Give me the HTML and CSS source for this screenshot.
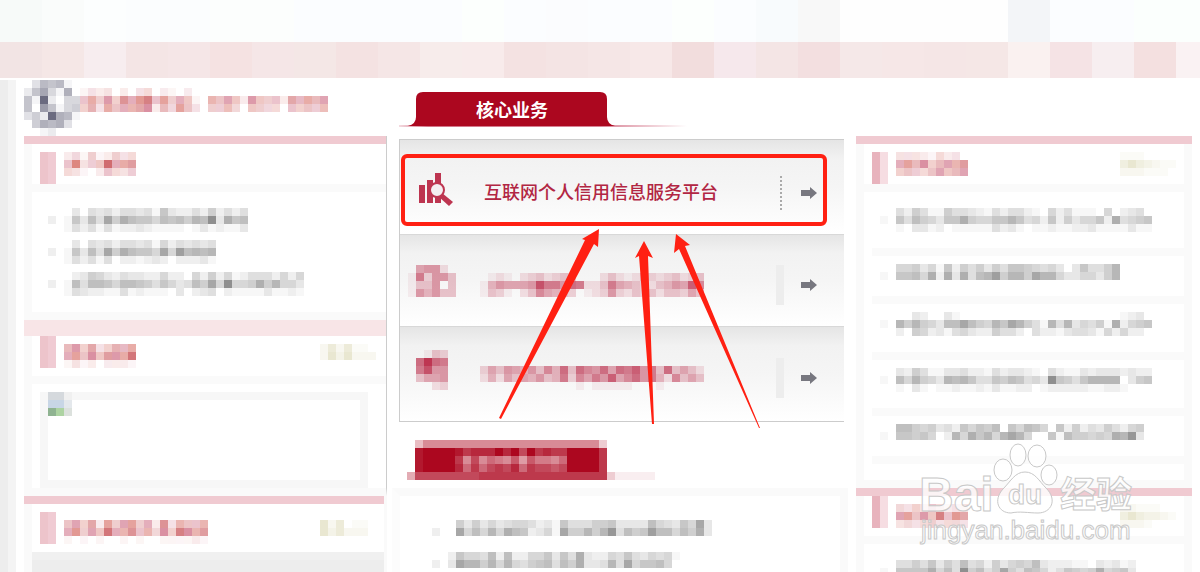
FILE: index.html
```
<!DOCTYPE html>
<html lang="zh-CN">
<head>
<meta charset="utf-8">
<title>核心业务</title>
<link rel="stylesheet" href="styles.css">
</head>
<body>
<div class="page">
  <header class="strip strip-top" data-strip="f7faf9 fafcfb fcfefe fbfdfe fbfdfe fcfefd fcfefd fbfdff fbfdff fbfdff fbfdff fcfffd fbfdff fbfcfe fbfdff fbfdff fcfffd fbfdff f8fbfd f8f8f8 fefefe fefefe fefefe fefefe f3f5f8 fbfdff fbfdff fbfffd fbfffd"></header>
  <nav class="strip strip-nav" data-strip="f2e4e4 f5e7e6 f7edef f4e5e5 f5e6e7 f5e2e2 f5e6e7 f4e7e6 f4e2e2 f5e6e6 f7eceb f8ebeb f4e2e2 f4e4e4 f5e6e6 f7e8e8 f2dddd f6e8ec f4e5e5 f3dfe0 f5e8e8 f6e7e7 f5e6e6 f5e7e6 faf1f0 f5e3e5 f7eef0 f4e0e0 faf2f3"></nav>

  <main class="columns">
    <section class="side">
      <div class="brand">
        <svg data-tint="slate" data-rows="0376710 2694180 61f2044 60a6145 352f871 0587830 0012000"></svg>
        <svg class="brand-name" data-tint="rose" data-rows="1323020340210200000000000000000 695a5b8bd6a5861086962a656297979 58396889b274a630557406544065657"></svg>
      </div>
      <section class="panel ruled">
        <div class="panel-head">
          <span class="marker"></span>
          <svg data-tint="rose" data-rows="241512534 6d356f89a 431026435"></svg>
        </div>
        <ul class="side-list">
          <li><svg data-tint="gray" data-rows="0003043424434173224262424 2017384b6a8775878698e3a78 0014241412232111101312113"></svg></li>
          <li><svg data-tint="gray" data-rows="000304342443415243434 2017384b6a8775b5c8989 001424140221232022231"></svg></li>
          <li><svg data-tint="gray" data-rows="00023653243322522052625124442525 20184887588764753486b5e556a69553 00143221141211103023402111131121"></svg></li>
        </ul>
      </section>
      <section class="panel ruled panel-soft">
        <div class="panel-head">
          <span class="marker"></span>
          <svg data-tint="rose" data-rows="7a5935879 8a6b6aa9e 131202221"></svg>
          <svg class="more" data-tint="olive" data-rows="2525110 2636222"></svg>
        </div>
        <div class="picture"><svg width="24" height="24" viewBox="0 0 24 24" shape-rendering="crispEdges"><path fill="#d5d9dd" d="M0 0h16v8H0z"/><path fill="#c8d6e6" d="M0 8h16v8H0z"/><path fill="#f0f0f0" d="M16 0h8v8h-8z"/><path fill="#e4e8ec" d="M16 8h8v8h-8z"/><path fill="#8fb391" d="M0 16h8v8H0z"/><path fill="#add3a2" d="M8 16h8v8H8z"/><path fill="#dce1dd" d="M16 16h8v8h-8z"/></svg></div>
      </section>
      <section class="panel panel-last">
        <div class="panel-head">
          <span class="marker"></span>
          <svg data-tint="rose" data-rows="69592a59a582b38668 8b596e88b684b5db8a 101010010100111121"></svg>
          <svg class="more" data-tint="olive" data-rows="0625011 0635222"></svg>
        </div>
      </section>
    </section>

    <section class="centre">
      <h2 class="tab">
        <svg width="290" height="35" viewBox="0 0 290 35"><defs><linearGradient id="fade"><stop offset="0" stop-color="#c8506a" stop-opacity=".3"/><stop offset=".1" stop-color="#c03a55"/><stop offset=".7" stop-color="#c8506a"/><stop offset="1" stop-color="#c8506a" stop-opacity="0"/></linearGradient></defs><path fill="url(#fade)" d="M0 33h288v2H0z" opacity=".7"/><path fill="#ac071f" d="M9 34q8-2 8-9V7q0-7 7-7h177q7 0 7 7v18q0 7 8 9z"/></svg>
        <span class="tab-label">核心业务</span>
      </h2>

      <div class="services">
        <a class="service" href="#personal">
          <svg class="service-icon" width="48" height="44" viewBox="0 0 48 44"><g fill="#bd3550"><path d="M11 14h6v18h-6zM19 9h6v23h-6zM27 2h6v30h-6z"/><path d="M34 22l11 9-4 4-10-9z"/></g><circle cx="29" cy="19" r="7" fill="#f4eef0" stroke="#bd3550" stroke-width="2"/></svg>
          <span class="service-name">互联网个人信用信息服务平台</span>
          <span class="dots"></span>
          <svg class="go" width="18" height="14" viewBox="0 0 18 14"><path fill="#77777f" d="M1 4h9V1l7 6-7 6v-3H1z"/></svg>
          <span class="highlight"></span>
        </a>
        <a class="service service-mid" href="#second">
          <svg class="service-icon" data-tint="crimson" data-rows="067720 193774 144704 175744 000000"></svg>
          <svg class="service-name" data-tint="crimson" data-rows="0121023423430002421243234234 1576667c997a92249654324576b8 1431024865430123732434244364"></svg>
          <span class="dots blurred"></span>
          <svg class="go" width="18" height="14" viewBox="0 0 18 14"><path fill="#77777f" d="M1 4h9V1l7 6-7 6v-3H1z"/></svg>
        </a>
        <a class="service service-end" href="#third">
          <svg class="service-icon" data-tint="crimson" data-rows="001430 0aea90 09c770 046670 000230 000000 000000"></svg>
          <svg class="service-name" data-tint="crimson" data-rows="3647657485a4a87a6a9b794a4642 2526465745938697b68a79528464 0000000000001011111000100000"></svg>
          <span class="dots blurred"></span>
          <svg class="go" width="18" height="14" viewBox="0 0 18 14"><path fill="#77777f" d="M1 4h9V1l7 6-7 6v-3H1z"/></svg>
        </a>
        <svg class="pointers" width="445" height="300" viewBox="400 140 445 300"><g fill="#ff2012"><path d="M599 229l-1 18-4-3-93 175-2-1 86-178-3-1z"/><path d="M644 241l9 17-5-2 6 168h-2l-13-168-4 2z"/><path d="M676 234l14 11-5 1 75 182h-1l-80-179-5 4z"/></g></svg>
      </div>

      <h2 class="tab-two">
        <svg data-tint="wine" data-rows="00477777777777777777777773 00effffecdddfdfbfcdccffffc 00effffc7b7987a6a8879ffffc 00effffd9c9bcbd9cbbabffffc 05bbbbbbbbcccccccccccccccc3111110000"></svg>
      </h2>
      <div class="news">
        <ul>
          <li><svg data-tint="gray" data-rows="000636353455423174446673333854375b3 200b58595a872351b66969d4867c88586a3"></svg></li>
          <li><svg data-tint="gray" data-rows="002755482822557374a322547435451 203b99695954678486a33494b57785"></svg></li>
        </ul>
      </div>
    </section>

    <section class="right">
      <section class="notice">
        <div class="panel-head">
          <span class="marker"></span>
          <svg data-tint="rose" data-rows="333214230 8a7b5798a 565469679"></svg>
          <svg class="more" data-tint="olive" data-rows="1110000 4643211 2221110"></svg>
        </div>
        <ul class="notice-list">
          <li><svg data-tint="gray" data-rows="0042641164432142442105241110502340 1074865377a655779745272635572a4567 0010331201111142310112112231111311"></svg></li>
          <li><svg data-tint="gray" data-rows="005563517264636477654530374469 107785a2a3a489c6996b9953355369"></svg></li>
          <li><svg data-tint="gray" data-rows="0000320031000000000000000000001230 1096965388b86597b964194935461a2567 0020652314532264420422134431525220"></svg></li>
          <li><svg data-tint="gray" data-rows="0032641133422142332104211323332322 108596539897447687453e764799990367 0010310112112131122012222211221000"></svg></li>
          <li><svg data-tint="gray" data-rows="008865634275768075875072624364256 10776750295a7959b950071866565a9d3"></svg></li>
        </ul>
      </section>
      <section class="notice notice-next">
        <div class="panel-head">
          <span class="marker"></span>
          <svg data-tint="rose" data-rows="435364233 9a6a6d6b9 343453443"></svg>
          <svg class="more" data-tint="olive" data-rows="2211100 4643321 2221000"></svg>
        </div>
        <ul class="notice-list"><li><svg data-tint="gray" data-rows="00446473648452635658322211032312 107777a584e6846b64875247656a5673"></svg></li></ul>
      </section>
    </section>
  </main>

  <svg class="watermark" width="230" height="110" viewBox="915 440 230 110">
    <g class="mark">
      <ellipse cx="1003" cy="470" rx="9" ry="11"/><ellipse cx="1018" cy="455" rx="8" ry="11"/><ellipse cx="1037" cy="456" rx="9" ry="11"/><ellipse cx="1049" cy="475" rx="8" ry="10"/>
      <path d="M1025 472c10 0 14 9 21 16 12 12 5 25-8 25-9 0-19-2-27 0-13 0-18-13-8-24 8-8 12-17 22-17z"/>
      <text class="mark-bai" x="919" y="511">Bai</text>
      <text class="mark-du" x="1008" y="504">du</text>
      <text class="mark-cn" x="1060" y="508">经验</text>
      <text class="mark-url" x="921" y="539">jingyan.baidu.com</text>
    </g>
  </svg>
</div>
<script src="mosaic.js"></script>
</body>
</html>
```

FILE: styles.css
```
* { box-sizing: border-box; }
body { margin: 0; background: #fff; font-family: "Liberation Sans", "Noto Sans CJK SC", sans-serif; }
ul, h2 { margin: 0; padding: 0; list-style: none; }
svg { display: block; flex: none; }
a { color: inherit; text-decoration: none; }
.page { position: relative; height: 100vh; overflow: hidden; }

.strip { display: flex; }
.strip span { flex: 42; }
.strip span:last-child { flex: 24; }
.strip-top { height: 42px; }
.strip-nav { height: 36px; margin-bottom: 2px; }

.columns { display: grid; grid-template-columns: 387px minmax(0, 1fr) 344px; min-height: 500px; }

.side { padding-left: 24px; background: linear-gradient(90deg, #ededed 8px, #f4f4f4 8px, #f4f4f4 16px, #fff 16px); }
.brand { display: flex; height: 56px; }
.brand-name { margin-top: 8px; }
.panel { border-left: 8px solid #fafafa; }
.panel::before { content: ""; display: block; height: 8px; margin-left: -8px; background: #f0cad1; }
.ruled { border-right: 1px solid #ccc; }
.panel-soft::before { height: 16px; background: #f8e5e7; }
.panel-head { display: flex; align-items: flex-start; height: 48px; padding: 8px 10px 0 8px; border-bottom: 8px solid #fafafa; }
.marker { width: 16px; height: 32px; margin-right: 8px; background: linear-gradient(90deg, #edc4cb 8px, #f0cbd3 8px); }
.more { margin-left: auto; }
.side-list { padding: 16px; border-bottom: 8px solid #fafafa; }
.side-list li + li { margin-top: 8px; }
.picture { height: 96px; margin: 8px 18px 0 8px; border: 8px solid #f7f7f7; }
.picture svg { margin-top: -8px; }
.panel-soft { border-bottom: 8px solid #fafafa; }
.panel-last { height: 76px; border-right: 3px solid #fafafa; background: #ededed; }
.panel-last .panel-head { height: 56px; padding: 16px 16px 0 8px; border-bottom-color: #f0f0f0; background: #fff; }
.panel-soft .marker, .panel-last .marker, .notice-next .marker { margin-top: -8px; }

.centre { padding: 12px 12px 0; }
.tab { position: relative; height: 47px; }
.tab-label { position: absolute; top: 0; left: 77px; color: #fff; font: 700 18px/34px "Noto Sans CJK SC", sans-serif; }
.services { position: relative; border: 1px solid #ccc; border-right: 0; }
.service { position: relative; display: flex; align-items: center; height: 94px; padding: 12px 26px 0 8px; background: linear-gradient(#e5e5e5, #f2f2f2 20%, #f5f5f5 50%, #fff); }
.service + .service { border-top: 1px solid #d8d8d8; }
.service-mid { height: 92px; padding-top: 8px; }
.service-end { height: 95px; padding-top: 8px; }
.service-icon { width: 48px; margin-right: 24px; }
span.service-name { margin-left: 4px; padding-bottom: 4px; color: #b22643; font: 500 18px/28px "Noto Sans CJK SC", sans-serif; white-space: nowrap; }
.dots { height: 34px; margin-left: auto; margin-right: 18px; border-left: 2px dotted #aaa; }
.blurred { width: 8px; height: 40px; margin-right: 16px; border: 0; background: #ededed; }
.highlight { position: absolute; inset: 14px 17px 8px 1px; border: 4px solid #ff2012; border-radius: 6px; }
.pointers { position: absolute; top: 0; left: 0; }
.tab-two { margin-top: 18px; }
.news { margin: 8px -4px 0 -7px; padding: 24px; border: 8px solid #fafafa; border-left-color: #fcfcfc; }
.news li + li { margin-top: 16px; }
.news svg { margin-left: 8px; }

.right { padding: 56px 8px 0 0; }
.notice { border: 8px solid #fafafa; border-width: 0 8px; }
.notice::before { content: ""; display: block; height: 8px; margin: 0 -8px; background: #f0cad1; }
.notice .panel-head { padding-right: 8px; }
.notice .marker { background: linear-gradient(90deg, #e8b3bd 8px, #f6dde2 8px); }
.notice-list { padding: 0 0 16px 8px; border-bottom: 8px solid #fafafa; }
.notice-list li { padding: 8px 0 16px 8px; border-bottom: 8px solid #fafafa; }
.notice-list li:first-child { padding-top: 16px; }

.watermark { position: absolute; top: 440px; right: 55px; }
.mark { fill: rgba(255, 255, 255, .8); stroke: #c8c8c8; stroke-width: 1; }
.mark-bai { font: bold 48px "Liberation Sans", sans-serif; }
.mark-du { font: bold 28px "Liberation Sans", sans-serif; }
.mark-cn { font: bold 36px "Noto Sans CJK SC", sans-serif; }
.mark-url { font: 26px "Liberation Sans", sans-serif; }
```

FILE: mosaic.js
```
// Each digit is the strength of one 8px cell, from 0 (clear) to f (full tint).
const tints = {
  slate: ['#6b6b80'], gray: ['#878787'], olive: ['#c8c48c'],
  rose: ['#d06c70', '#cc6880', '#d8746c'], crimson: ['#b92846'], wine: ['#ac071f']
};

for (const svg of document.querySelectorAll('svg[data-rows]')) {
  const rows = svg.dataset.rows.split(' ');
  const palette = tints[svg.dataset.tint];
  const columns = Math.max(...rows.map(row => row.length));
  svg.setAttribute('width', columns * 8);
  svg.setAttribute('height', rows.length * 8);
  svg.setAttribute('shape-rendering', 'crispEdges');
  rows.forEach((row, y) => [...row].forEach((digit, x) => {
    const rect = document.createElementNS('http://www.w3.org/2000/svg', 'rect');
    const attributes = { x: x * 8, y: y * 8, width: 8, height: 8,
      fill: palette[(x + y) % palette.length], 'fill-opacity': parseInt(digit, 16) / 15 };
    for (const name in attributes) rect.setAttribute(name, attributes[name]);
    svg.append(rect);
  }));
}

for (const strip of document.querySelectorAll('[data-strip]')) {
  for (const color of strip.dataset.strip.split(' ')) {
    const cell = document.createElement('span');
    cell.style.background = '#' + color;
    strip.append(cell);
  }
}
```
